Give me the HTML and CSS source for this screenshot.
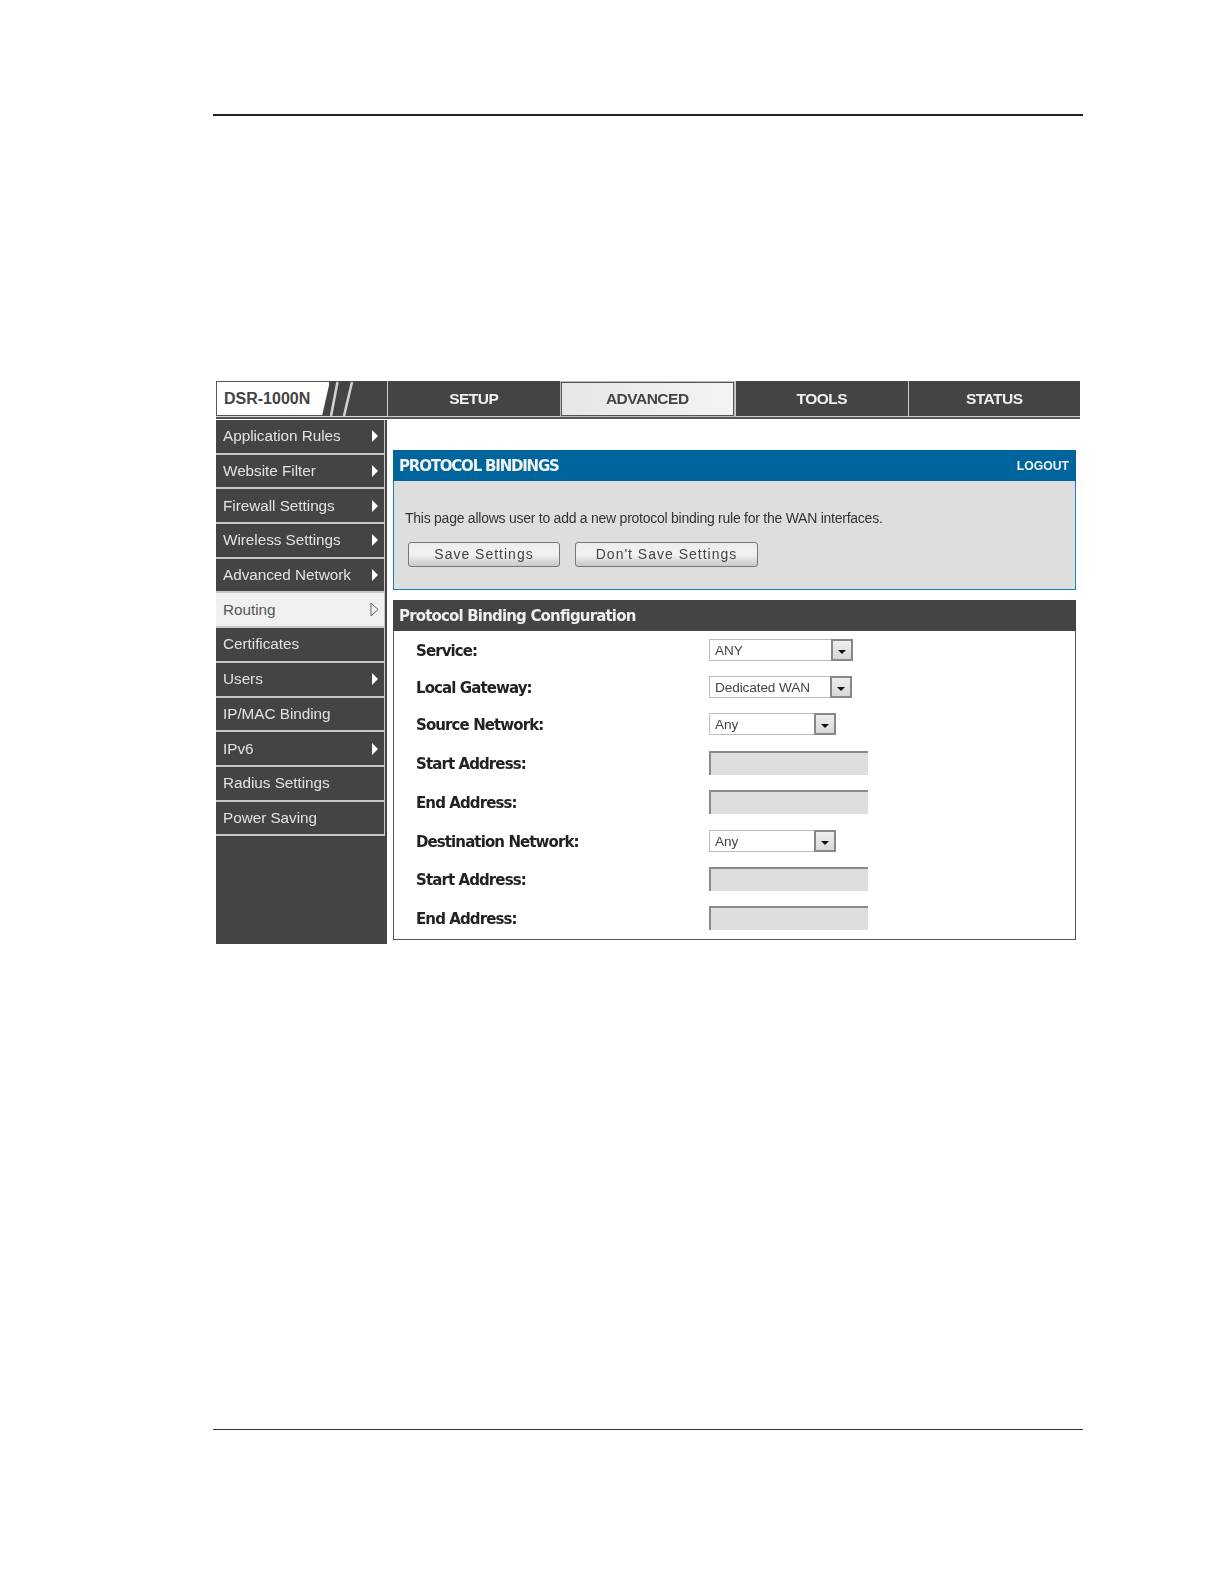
FILE: index.html
```html
<!DOCTYPE html>
<html lang="en">
<head>
<meta charset="utf-8">
<title>Protocol Bindings</title>
<link rel="stylesheet" href="styles.css">
</head>
<body>
<div class="page">
  <div class="rule rule-top"></div>
  <div class="app">
    <div class="topbar">
      <div class="logo">
        <div class="logo-plate">DSR-1000N</div>
        <svg class="logo-slashes" width="34" height="36" viewBox="0 0 34 36"><path d="M7.5 1 L1 35 M22 1 L14 35" stroke="#d0d0d0" stroke-width="2.6" fill="none"/></svg>
      </div>
      <div class="tab">SETUP</div>
      <div class="tab tab-active">ADVANCED</div>
      <div class="tab">TOOLS</div>
      <div class="tab">STATUS</div>
    </div>
    <div class="content">
      <nav class="sidebar">
        <div class="item"><span>Application Rules</span><svg class="arrow" width="8" height="12" viewBox="0 0 8 12"><path d="M1 0 L7 6 L1 12 Z" fill="#fff"/></svg></div>
        <div class="item"><span>Website Filter</span><svg class="arrow" width="8" height="12" viewBox="0 0 8 12"><path d="M1 0 L7 6 L1 12 Z" fill="#fff"/></svg></div>
        <div class="item"><span>Firewall Settings</span><svg class="arrow" width="8" height="12" viewBox="0 0 8 12"><path d="M1 0 L7 6 L1 12 Z" fill="#fff"/></svg></div>
        <div class="item"><span>Wireless Settings</span><svg class="arrow" width="8" height="12" viewBox="0 0 8 12"><path d="M1 0 L7 6 L1 12 Z" fill="#fff"/></svg></div>
        <div class="item"><span>Advanced Network</span><svg class="arrow" width="8" height="12" viewBox="0 0 8 12"><path d="M1 0 L7 6 L1 12 Z" fill="#fff"/></svg></div>
        <div class="item item-active"><span>Routing</span><svg class="arrow" width="9" height="15" viewBox="0 0 9 15"><path d="M1 1 L8 7.5 L1 14 Z" fill="none" stroke="#666" stroke-width="1"/></svg></div>
        <div class="item"><span>Certificates</span></div>
        <div class="item"><span>Users</span><svg class="arrow" width="8" height="12" viewBox="0 0 8 12"><path d="M1 0 L7 6 L1 12 Z" fill="#fff"/></svg></div>
        <div class="item"><span>IP/MAC Binding</span></div>
        <div class="item"><span>IPv6</span><svg class="arrow" width="8" height="12" viewBox="0 0 8 12"><path d="M1 0 L7 6 L1 12 Z" fill="#fff"/></svg></div>
        <div class="item"><span>Radius Settings</span></div>
        <div class="item"><span>Power Saving</span></div>
      </nav>
      <main class="main">
        <section class="panel-info">
          <header class="panel-info-head"><h1>PROTOCOL BINDINGS</h1><a class="logout">LOGOUT</a></header>
          <div class="panel-info-body">
            <p class="intro">This page allows user to add a new protocol binding rule for the WAN interfaces.</p>
            <div class="buttons">
              <button class="btn btn-save">Save Settings</button>
              <button class="btn btn-dont">Don't Save Settings</button>
            </div>
          </div>
        </section>
        <section class="panel-config">
          <h2 class="panel-config-head">Protocol Binding Configuration</h2>
          <div class="form">
            <div class="row"><label>Service:</label><div class="select w-any"><span>ANY</span><i class="drop"><b></b></i></div></div>
            <div class="row"><label>Local Gateway:</label><div class="select w-wan"><span>Dedicated WAN</span><i class="drop"><b></b></i></div></div>
            <div class="row row-loose"><label>Source Network:</label><div class="select w-net"><span>Any</span><i class="drop"><b></b></i></div></div>
            <div class="row"><label>Start Address:</label><div class="input"></div></div>
            <div class="row row-loose"><label>End Address:</label><div class="input"></div></div>
            <div class="row"><label>Destination Network:</label><div class="select w-net"><span>Any</span><i class="drop"><b></b></i></div></div>
            <div class="row"><label>Start Address:</label><div class="input"></div></div>
            <div class="row"><label>End Address:</label><div class="input"></div></div>
          </div>
        </section>
      </main>
    </div>
  </div>
  <div class="rule rule-bottom"></div>
</div>
</body>
</html>
```
FILE: styles.css
```css
* { box-sizing: border-box; }
html, body { margin: 0; background: #fff; }
body { font-family: "Liberation Sans", Arial, sans-serif; }
.page { width: 1224px; height: 1584px; padding: 114px 141px 0 213px; }
.rule { height: 2px; background: #222; }
.rule-top { margin-bottom: 265px; }
.rule-bottom { height: 1px; margin-top: 485px; background: #333; }
.app { margin: 0 3px; width: 864px; filter: blur(0.35px); }
.topbar { display: flex; height: 38px; background: #444; border-bottom: 2px solid #555; box-shadow: inset 0 -1px 0 #ddd; }
.logo { width: 171px; display: flex; height: 36px; flex: none; }
.logo-plate { width: 114px; height: 35px; background: #fff; border: 1px solid #555; padding: 0 0 0 7px; line-height: 34px; font-size: 16px; font-weight: bold; color: #444; clip-path: polygon(0 0, 100% 0, 93% 100%, 0 100%); }
.logo-slashes { flex: none; }
.tab { flex: 1; height: 36px; line-height: 35px; text-align: center; font-size: 15.5px; font-weight: bold; letter-spacing: -0.5px; color: #f0f0f0; border-left: 1px solid #ccc; border-bottom: 1px solid #ccc; }
.tab-active { color: #444; line-height: 32px; background: linear-gradient(90deg, #e6e6e6, #f4f4f4); border: 2px solid #555; outline: 1px solid #bbb; outline-offset: -1px; }
.content { display: flex; }
.sidebar { width: 171px; flex: none; height: 524px; margin-top: 1px; padding-right: 2px; background: #444; display: flex; flex-direction: column; }
.item { height: 34.7px; flex: none; display: flex; align-items: center; justify-content: space-between; padding: 0 5px 0 7px; border-bottom: 2px solid #c8c8c8; border-right: 1px solid #c8c8c8; color: #e2e2e2; font-size: 15.3px; letter-spacing: -0.03px; }
.item-active { background: #f0f0f0; color: #555; }
.main { flex: 1; padding: 31px 4px 0 6px; min-width: 0; }
.panel-info { border: 1px solid #1f7fb5; border-top: 0; background: #dedede; height: 140px; }
.panel-info-head { height: 31px; margin: 0 -1px; background: #00659c; display: flex; justify-content: space-between; align-items: center; padding: 1px 7px 0 6px; color: #f2f2f2; }
.panel-info-head h1 { margin: 0; font-size: 15px; font-weight: bold; font-family: "DejaVu Sans", sans-serif; letter-spacing: -1.2px; }
.logout { font-size: 12.2px; font-weight: bold; }
.panel-info-body { padding: 27px 0 0 11px; }
.intro { margin: 0 0 14px; font-size: 14px; line-height: 20px; color: #333; letter-spacing: -0.25px; }
.buttons { display: flex; gap: 15px; padding-left: 3px; }
.btn { height: 25px; padding: 0 0 2px; border: 1px solid #777; border-radius: 3px; background: linear-gradient(#ececec, #f2f2f2 50%, #c8c8c8); font: 14px "Liberation Sans", Arial, sans-serif; letter-spacing: 1px; color: #444; }
.btn-save { width: 152px; }
.btn-dont { width: 183px; }
.panel-config { margin-top: 10px; border: 1px solid #555; border-top: 0; height: 340px; }
.panel-config-head { margin: 0 -1px; height: 31px; background: #444; color: #eee; font-size: 15px; line-height: 32px; padding-left: 6px; font-weight: bold; font-family: "DejaVu Sans", sans-serif; letter-spacing: -0.83px; }
.form { padding: 8px 0 0 22px; display: flex; flex-direction: column; gap: 15px; }
.row { display: flex; align-items: center; }
.row-loose { margin-bottom: 1px; }
.row label { width: 293px; flex: none; padding-top: 2px; font-family: "DejaVu Sans", sans-serif; font-weight: bold; font-size: 15px; letter-spacing: -0.9px; color: #222; }
.select { height: 22px; display: flex; justify-content: space-between; align-items: center; background: #fff; border: 1px solid #bbb; font-size: 13.6px; color: #444; padding-left: 5px; }
.select span { letter-spacing: -0.1px; }
.w-any { width: 144px; }
.w-wan { width: 143px; }
.w-net { width: 127px; }
.drop { width: 22px; height: 22px; margin: 0 -1px 0 0; border: 2px solid #888; background: linear-gradient(#eee, #d8d8d8); display: flex; align-items: center; justify-content: center; }
.drop b { width: 0; height: 0; margin-top: 3px; border: 4.5px solid transparent; border-top: 4px solid #111; border-bottom: 0; }
.input { width: 159px; height: 24px; background: #dedede; border-top: 2px solid #8a8a8a; border-left: 2px solid #8a8a8a; }
```
